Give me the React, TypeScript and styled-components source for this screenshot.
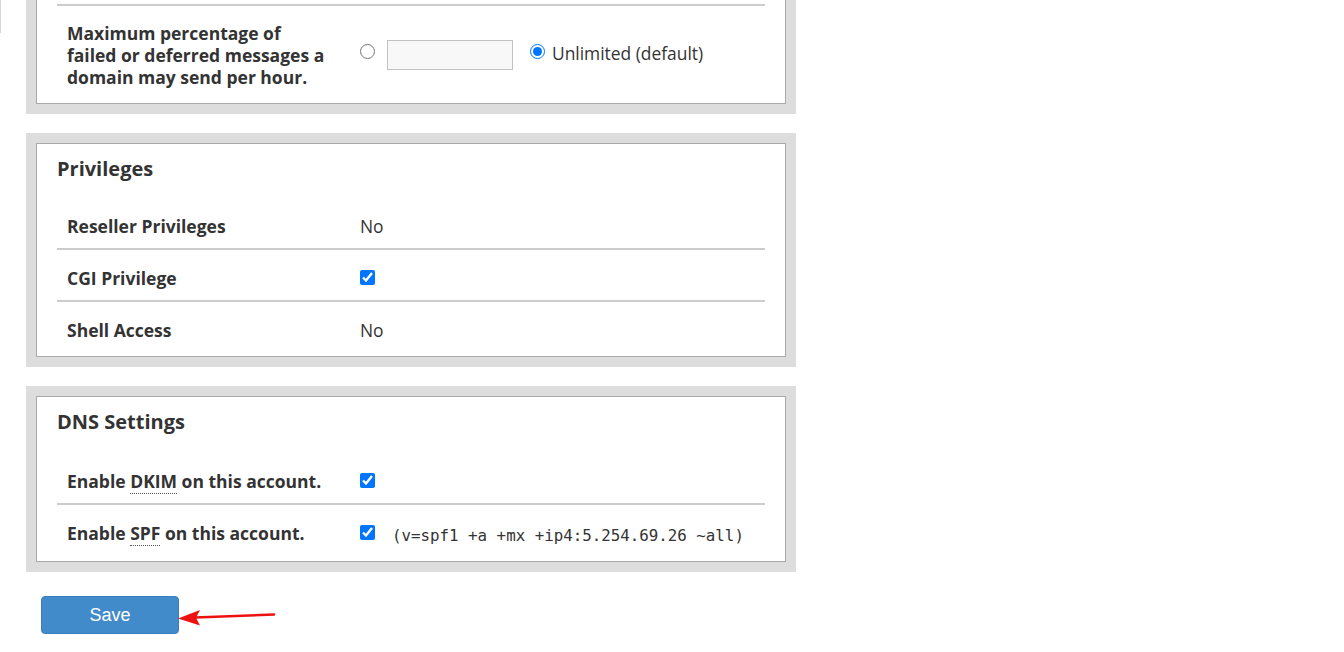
import React from "react";
import styled, { createGlobalStyle } from "styled-components";

const GlobalStyle = createGlobalStyle`
  html, body {
    margin: 0;
    padding: 0;
    background: #ffffff;
    overflow: hidden;
  }
  body {
    font-family: "Open Sans", "Liberation Sans", sans-serif;
    color: #333333;
  }
`;

const Page = styled.div`
  display: flex;
  align-items: flex-start;
  width: 1344px;
  height: 652px;
  overflow: hidden;
`;

const Rail = styled.div`
  width: 1px;
  height: 33px;
  background: #d9d9d9;
  flex: none;
`;

const Main = styled.main`
  display: flex;
  flex-direction: column;
  gap: 19px;
  padding-left: 25px;
`;

const Section = styled.section<{ $cut?: boolean }>`
  width: 770px;
  box-sizing: border-box;
  padding: ${(p) => (p.$cut ? "0 10px 10px" : "10px")};
  background: #dddddd;
`;

const Panel = styled.div<{ $bottom?: number; $cut?: boolean }>`
  background: #ffffff;
  border: 1px solid #a9a9a9;
  ${(p) => (p.$cut ? "border-top: none; padding-top: 4px;" : "")}
  padding-left: 20px;
  padding-right: 20px;
  padding-bottom: ${(p) => p.$bottom ?? 4}px;
`;

const Heading = styled.h2<{ $after?: number }>`
  margin: 0 0 ${(p) => p.$after ?? 15}px;
  padding-top: 11px;
  font-size: 20px;
  line-height: 28px;
  font-weight: 700;
  color: #333333;
`;

const Rows = styled.div`
  display: flex;
  flex-direction: column;
`;

const Row = styled.div<{ $lead?: boolean }>`
  display: grid;
  grid-template-columns: 293px 1fr;
  align-items: center;
  min-height: 50px;
  box-sizing: border-box;
  ${(p) => (p.$lead ? "border-top: 2px solid #cccccc;" : "")}
  & + & {
    border-top: 2px solid #cccccc;
  }
`;

const Label = styled.div<{ $lift?: number }>`
  padding: ${(p) => 17 - (p.$lift ?? 0)}px 10px ${(p) => 11 + (p.$lift ?? 0)}px;
  font-size: 17.5px;
  line-height: 22px;
  font-weight: 700;
  color: #333333;
`;

const Value = styled.div<{ $drop?: number }>`
  display: flex;
  align-items: center;
  padding: ${(p) => p.$drop ?? 5}px 10px 0;
  font-size: 17.4px;
  line-height: 22px;
  color: #333333;
`;

const Abbr = styled.abbr`
  text-decoration: none;
  border-bottom: 1px dotted #555555;
  cursor: help;
`;

const Radio = styled.input.attrs({ type: "radio" })<{ $gap?: number }>`
  width: 15px;
  height: 15px;
  margin: 0 ${(p) => p.$gap ?? 12}px 4px 0;
  flex: none;
`;

const Check = styled.input.attrs({ type: "checkbox" })<{ $gap?: number }>`
  width: 15px;
  height: 15px;
  margin: 0 ${(p) => p.$gap ?? 0}px 0 0;
  flex: none;
`;

const TextBox = styled.input.attrs({ type: "text" })`
  width: 126px;
  height: 30px;
  box-sizing: border-box;
  margin: 4px 17px 0 0;
  border: 1px solid #c2c2c2;
  background: #f8f8f8;
  padding: 0 6px;
  font-size: 15px;
`;

const Code = styled.span`
  font-family: "DejaVu Sans Mono", "Liberation Mono", monospace;
  font-size: 15.8px;
  line-height: 22px;
  color: #333333;
  padding-top: 6px;
`;

const ActionRow = styled.div`
  display: flex;
  align-items: center;
  margin-top: 5px;
  padding-left: 15px;
`;

const SaveButton = styled.button`
  width: 138px;
  height: 38px;
  box-sizing: border-box;
  background: #428bca;
  border: 1px solid #3a7fbd;
  border-radius: 4px;
  color: #ffffff;
  font-family: "Liberation Sans", Arial, sans-serif;
  font-size: 18px;
  cursor: pointer;
  padding: 0;
`;

const ArrowSvg = styled.svg`
  display: block;
  margin-left: -2px;
  margin-top: 3px;
  flex: none;
`;

export default function App() {
  return (
    <>
      <GlobalStyle />
      <Page>
        <Rail />
        <Main>
          <Section $cut>
            <Panel $cut $bottom={3}>
              <Rows>
                <Row $lead>
                  <Label $lift={1}>
                    Maximum percentage of
                    <br />
                    failed or deferred messages a
                    <br />
                    domain may send per hour.
                  </Label>
                  <Value $drop={0}>
                    <Radio name="failed" />
                    <TextBox />
                    <Radio name="failed" defaultChecked $gap={7} />
                    Unlimited (default)
                  </Value>
                </Row>
              </Rows>
            </Panel>
          </Section>

          <Section>
            <Panel>
              <Heading>Privileges</Heading>
              <Rows>
                <Row>
                  <Label>Reseller Privileges</Label>
                  <Value>No</Value>
                </Row>
                <Row>
                  <Label>CGI Privilege</Label>
                  <Value>
                    <Check defaultChecked />
                  </Value>
                </Row>
                <Row>
                  <Label>Shell Access</Label>
                  <Value>No</Value>
                </Row>
              </Rows>
            </Panel>
          </Section>

          <Section>
            <Panel $bottom={6}>
              <Heading $after={17}>DNS Settings</Heading>
              <Rows>
                <Row>
                  <Label>
                    Enable <Abbr title="DomainKeys Identified Mail">DKIM</Abbr> on this
                    account.
                  </Label>
                  <Value>
                    <Check defaultChecked />
                  </Value>
                </Row>
                <Row>
                  <Label>
                    Enable <Abbr title="Sender Policy Framework">SPF</Abbr> on this account.
                  </Label>
                  <Value>
                    <Check defaultChecked $gap={17} />
                    <Code>(v=spf1 +a +mx +ip4:5.254.69.26 ~all)</Code>
                  </Value>
                </Row>
              </Rows>
            </Panel>
          </Section>

          <ActionRow>
            <SaveButton type="button">Save</SaveButton>
            <ArrowSvg width="100" height="30" viewBox="0 0 100 30" aria-hidden="true">
              <line x1="18" y1="15.5" x2="97" y2="12.5" stroke="#ee1111" strokeWidth="2.6" strokeLinecap="round" />
              <polygon points="1,16.5 23,8 19,15.8 23,23.5" fill="#ee1111" />
            </ArrowSvg>
          </ActionRow>
        </Main>
      </Page>
    </>
  );
}
